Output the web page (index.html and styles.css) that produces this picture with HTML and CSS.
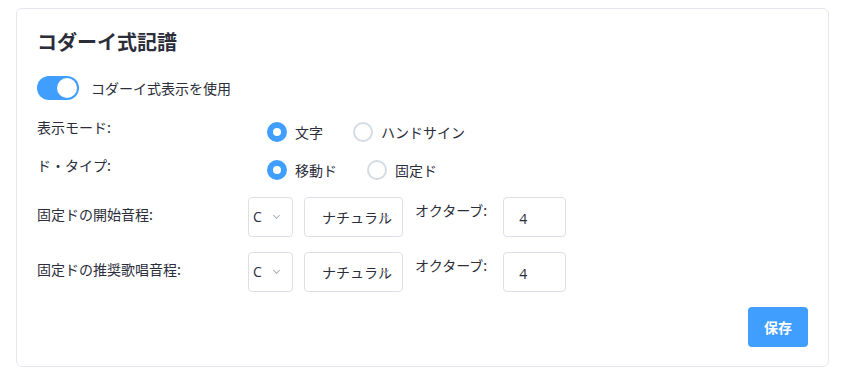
FILE: index.html
```html
<!DOCTYPE html>
<html lang="ja">
<head>
<meta charset="utf-8">
<title>コダーイ式記譜</title>
<link rel="stylesheet" href="styles.css">
</head>
<body>
<div class="card">
  <h2 class="title">コダーイ式記譜</h2>

  <div class="switch-row">
    <span class="switch on"><span class="knob"></span></span>
    <span class="switch-label">コダーイ式表示を使用</span>
  </div>

  <div class="row radio-row first">
    <div class="label">表示モード:</div>
    <div class="radios">
      <label class="radio checked"><span class="dot"></span><span class="rtext">文字</span></label>
      <label class="radio"><span class="dot"></span><span class="rtext">ハンドサイン</span></label>
    </div>
  </div>

  <div class="row radio-row second">
    <div class="label">ド・タイプ:</div>
    <div class="radios">
      <label class="radio checked"><span class="dot"></span><span class="rtext">移動ド</span></label>
      <label class="radio"><span class="dot"></span><span class="rtext">固定ド</span></label>
    </div>
  </div>

  <div class="row field-row third">
    <div class="label field-label">固定ドの開始音程:</div>
    <div class="fields">
      <div class="select note"><span class="val">C</span><span class="chev"></span></div>
      <div class="select acc"><span class="val">ナチュラル</span><span class="chev"></span></div>
      <div class="oct-label">オクターブ:</div>
      <div class="num">4</div>
    </div>
  </div>

  <div class="row field-row fourth">
    <div class="label field-label">固定ドの推奨歌唱音程:</div>
    <div class="fields">
      <div class="select note"><span class="val">C</span><span class="chev"></span></div>
      <div class="select acc"><span class="val">ナチュラル</span><span class="chev"></span></div>
      <div class="oct-label">オクターブ:</div>
      <div class="num">4</div>
    </div>
  </div>

  <div class="actions">
    <button class="save">保存</button>
  </div>
</div>
</body>
</html>
```

FILE: styles.css
```css
* { box-sizing: border-box; }

body {
  margin: 8px 19px 0 16px;
  background: #ffffff;
  font-family: "Open Sans", "Noto Sans CJK JP", sans-serif;
  color: #303133;
  font-size: 14px;
}

.card {
  border: 1px solid #e4e7ed;
  border-radius: 6px;
  padding: 19px 20px 19px 20px;
  height: 359px;
}

.title {
  margin: 0;
  font-family: "Noto Sans CJK JP", sans-serif;
  font-size: 20px;
  font-weight: 700;
  line-height: 28px;
  color: #2b2d3a;
}

.switch-row {
  display: flex;
  align-items: center;
  margin-top: 20px;
  height: 24px;
  gap: 12px;
}

.switch {
  position: relative;
  width: 42px;
  height: 24px;
  border-radius: 12px;
  background: #dcdfe6;
}

.switch.on { background: #409eff; }

.knob {
  position: absolute;
  top: 2px;
  right: 2px;
  width: 20px;
  height: 20px;
  border-radius: 50%;
  background: #ffffff;
}

.switch-label {
  font-family: "Noto Sans CJK JP", sans-serif;
  line-height: 20px;
  color: #2b2d3a;
}

.row {
  display: grid;
  grid-template-columns: 211px 1fr;
  align-items: start;
}

.label {
  font-family: "Noto Sans CJK JP", sans-serif;
  line-height: 20px;
  color: #2b2d3a;
}

.radio-row.first { margin-top: 17px; }
.radio-row.second { margin-top: 13px; }

.radios {
  display: flex;
  padding-left: 19px;
  margin-top: 5px;
}

.radio {
  display: flex;
  align-items: center;
  margin-right: 30px;
  line-height: 20px;
  font-family: "Noto Sans CJK JP", sans-serif;
  color: #2b2d3a;
}

.dot {
  width: 20px;
  height: 20px;
  border-radius: 50%;
  border: 2px solid #d3dce3;
  background: #ffffff;
  margin-right: 8px;
}

.radio.checked .dot {
  border: 6px solid #409eff;
}

.field-row.third { margin-top: 17px; }
.field-row.fourth { margin-top: 15px; }

.field-label { padding-top: 7px; }

.fields {
  display: flex;
  align-items: flex-start;
}

.select {
  position: relative;
  height: 40px;
  border: 1px solid #dcdfe6;
  border-radius: 4px;
  display: flex;
  align-items: center;
  background: #fff;
  color: #2b2d3a;
}

.select.note {
  width: 45px;
  padding-left: 4px;
}

.select.acc {
  width: 99px;
  margin-left: 11px;
  padding-left: 17px;
  font-family: "Noto Sans CJK JP", sans-serif;
  white-space: nowrap;
  overflow: hidden;
}

.val { line-height: 20px; }

.chev {
  position: absolute;
  top: 15px;
  width: 5px;
  height: 5px;
  border-right: 1.2px solid #aab2bd;
  border-bottom: 1.2px solid #aab2bd;
  transform: rotate(45deg);
}

.select.note .chev { left: 25px; }
.select.acc .chev { right: 14px; }

.oct-label {
  margin-left: 12px;
  margin-top: 3px;
  line-height: 20px;
  font-family: "Noto Sans CJK JP", sans-serif;
  color: #2b2d3a;
}

.num {
  width: 63px;
  height: 40px;
  margin-left: 16px;
  border: 1px solid #dcdfe6;
  border-radius: 4px;
  padding-left: 15px;
  padding-top: 2px;
  display: flex;
  align-items: center;
  color: #2b2d3a;
}

.actions {
  display: flex;
  justify-content: flex-end;
  margin-top: 15px;
}

.save {
  width: 60px;
  height: 40px;
  border: none;
  border-radius: 4px;
  background: #409eff;
  color: #ffffff;
  font-family: "Noto Sans CJK JP", sans-serif;
  font-weight: 700;
  font-size: 14px;
  padding: 0;
}
```
